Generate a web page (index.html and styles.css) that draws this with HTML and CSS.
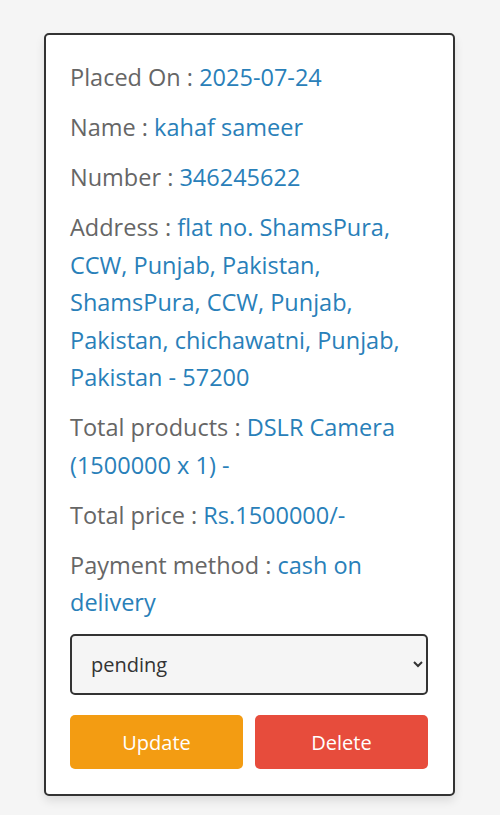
FILE: index.html
```html
<!DOCTYPE html>
<html lang="en">
<head>
<meta charset="utf-8">
<title>Order</title>
<link rel="stylesheet" href="styles.css">
</head>
<body>
<div class="box">
  <p class="row">Placed On : <span class="val">2025-07-24</span></p>
  <p class="row">Name : <span class="val">kahaf sameer</span></p>
  <p class="row">Number : <span class="val">346245622</span></p>
  <p class="row">Address : <span class="val">flat no. ShamsPura, CCW, Punjab, Pakistan, ShamsPura, CCW, Punjab, Pakistan, chichawatni, Punjab, Pakistan - 57200</span></p>
  <p class="row">Total products : <span class="val">DSLR Camera (1500000 x 1) -</span></p>
  <p class="row">Total price : <span class="val">Rs.1500000/-</span></p>
  <p class="row">Payment method : <span class="val">cash on delivery</span></p>
  <form class="form">
    <select class="select">
      <option>pending</option>
      <option>completed</option>
    </select>
    <div class="actions">
      <button type="button" class="btn btn-update">Update</button>
      <button type="button" class="btn btn-delete">Delete</button>
    </div>
  </form>
</div>
</body>
</html>
```
FILE: styles.css
```css
* { box-sizing: border-box; }
html, body { margin: 0; padding: 0; }
body {
  background: #f5f5f5;
  font-family: "Open Sans", Lato, sans-serif;
  padding-top: 33px;
  height: 815px;
}
.box {
  width: 411px;
  margin: 0 auto 0 44px;
  background: #fff;
  border: 2px solid #333;
  border-radius: 5px;
  box-shadow: 0 5px 10px rgba(0,0,0,0.1);
  padding: 24px 25px 25px 24px;
}
.row {
  margin: 0 0 12.5px;
  font-size: 23.5px;
  line-height: 37.5px;
  color: #666;
}
.val { color: #2980b9; }
.form { margin: 0; }
.select {
  display: block;
  width: 100%;
  height: 61px;
  border: 2px solid #333;
  border-radius: 5px;
  background: #f5f5f5;
  font-family: inherit;
  font-size: 20px;
  color: #333;
  padding: 0 14px 0 15px;
}
.actions {
  display: flex;
  gap: 12px;
  margin-top: 20px;
}
.btn {
  flex: 1;
  height: 54px;
  border: none;
  border-radius: 5px;
  color: #fff;
  font-family: inherit;
  font-size: 20px;
}
.btn-update { background: #f39c12; }
.btn-delete { background: #e74c3c; }
```
